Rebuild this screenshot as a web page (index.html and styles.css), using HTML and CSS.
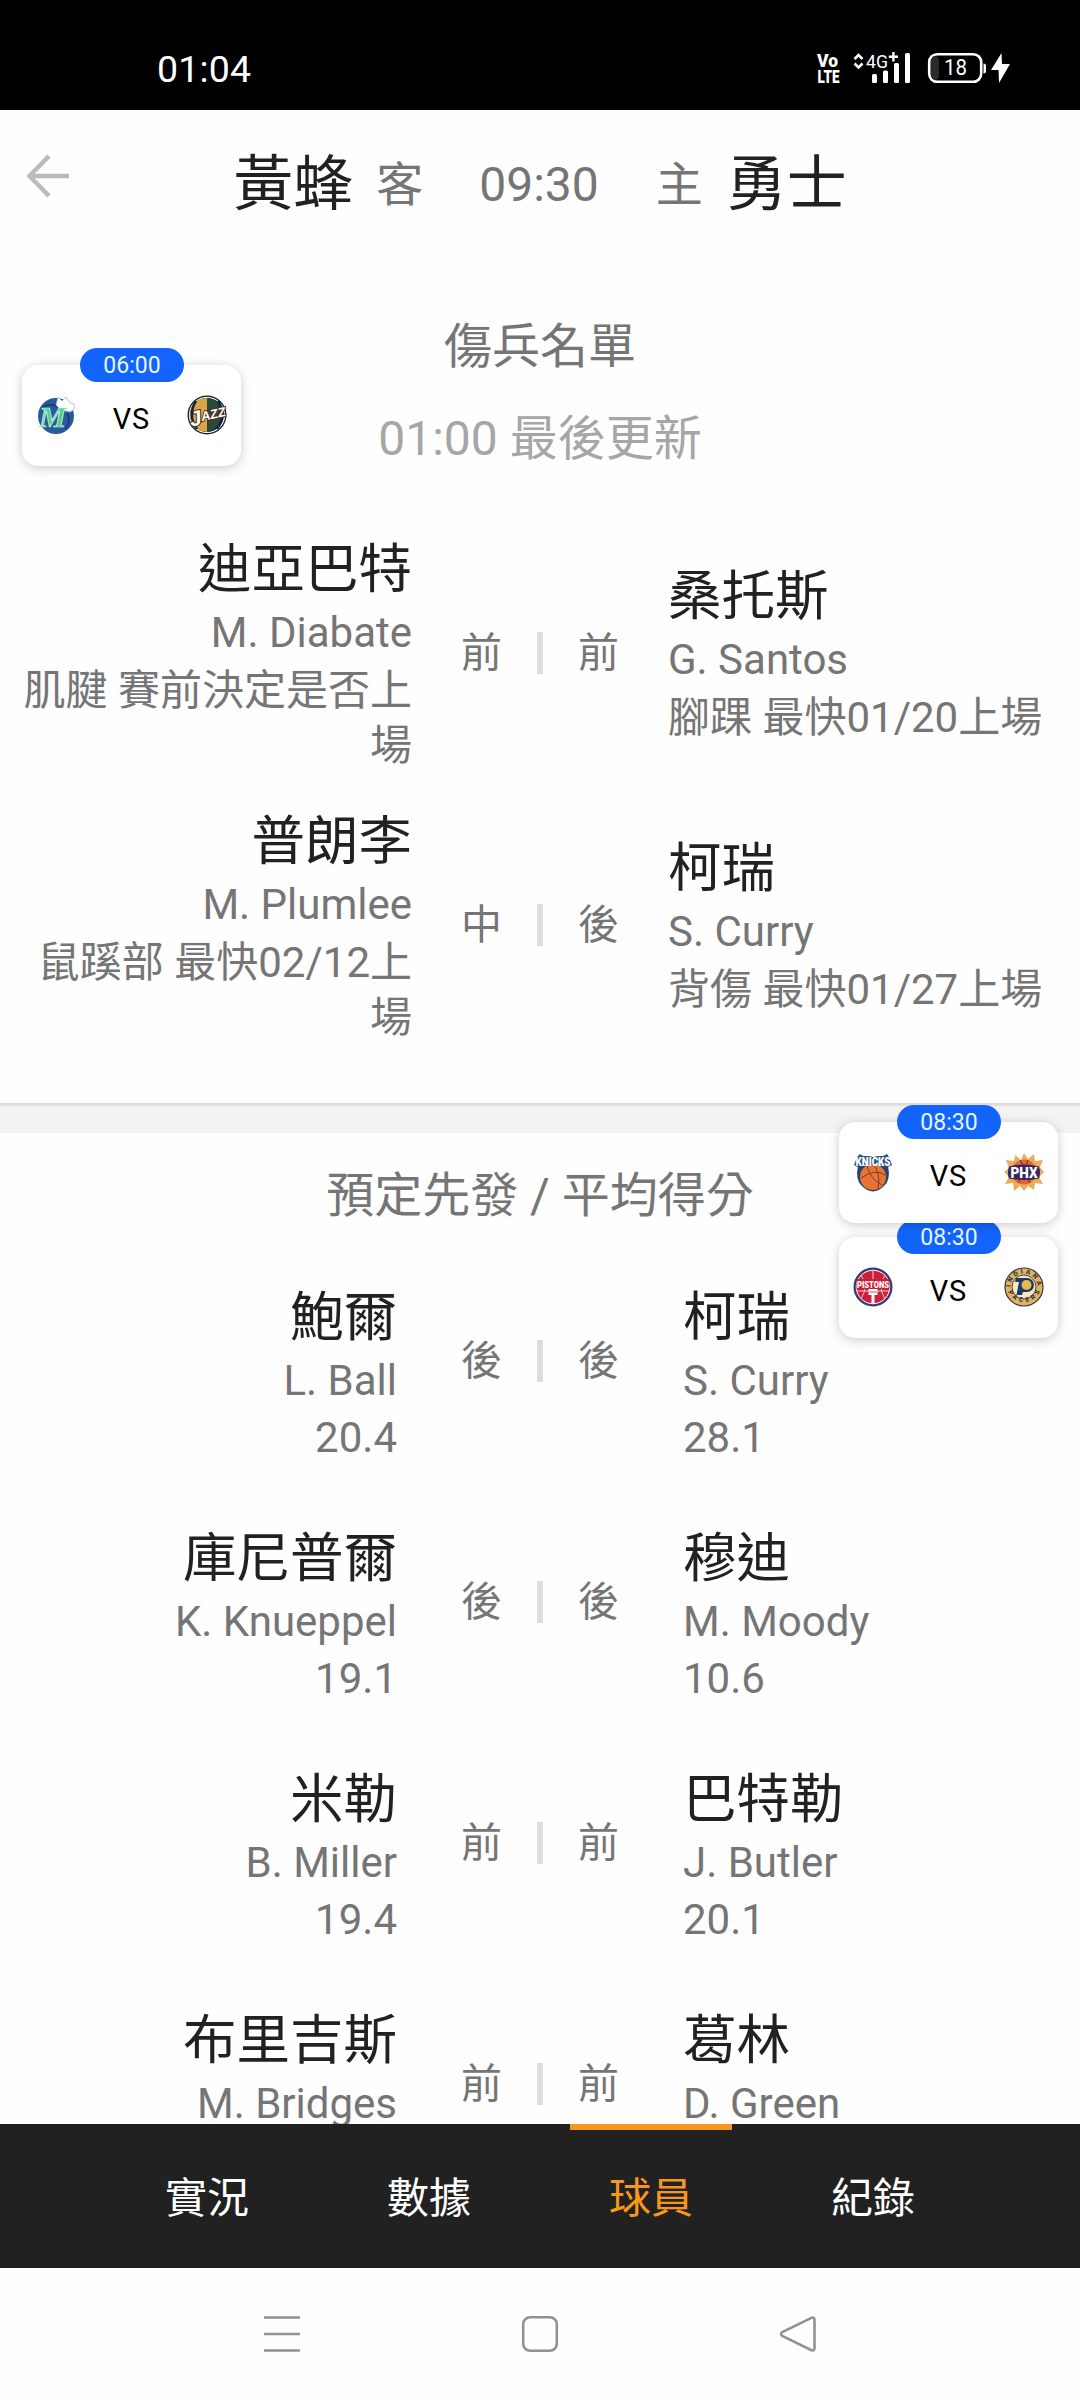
FILE: index.html
```html
<!DOCTYPE html>
<html lang="zh-Hant">
<head>
  <meta charset="UTF-8" />
  <meta name="viewport" content="width=device-width, initial-scale=1.0" />
  <title>黃蜂 vs 勇士</title>
  <link rel="stylesheet" href="styles.css">
</head>
<body>
  <div class="status-bar">
    <span class="clock">01:04</span>
    <svg class="status-icons" viewBox="812 50 204 40" fill="#fff">
      <text x="817" y="68" font-size="17.500" font-weight="900" textLength="21" lengthAdjust="spacingAndGlyphs">Vo</text>
      <text x="817.5" y="84" font-size="18.5" font-weight="900" textLength="22" lengthAdjust="spacingAndGlyphs">LTE</text>
      <path d="M854.5 60l4-4 4 4M854.5 64.5l4 4 4-4" fill="none" stroke="#fff" stroke-width="2.6" />
      <text x="866" y="68.5" font-size="18.5" textLength="22" lengthAdjust="spacingAndGlyphs">4G</text>
      <path d="M892.2 53h2.4v3.6h3.4V59h-3.4v3.4h-2.4V59h-3.4v-2.4h3.4z" />
      <rect x="872" y="75" width="5" height="9" rx="1.5" />
      <rect x="883" y="71.500" width="5" height="12.500" rx="1.5" />
      <rect x="894" y="64" width="5" height="20" rx="1.5" />
      <rect x="905" y="54" width="5" height="30" rx="1.5" />
      <rect x="929.2" y="55.2" width="52" height="27.600" rx="8" fill="none" stroke="#fff" stroke-width="2.6" />
      <rect x="931" y="57" width="8" height="24" rx="5" fill="#2a2a2a" />
      <path d="M983.500 64.500q2.500 0 2.500 2v6q0 2-2.500 2z" />
      <text x="944" y="76" font-size="21.500" textLength="23" lengthAdjust="spacingAndGlyphs">18</text>
      <path d="M1001.500 54l-10.500 17h7.500l.5 13 11-19h-8z" />
    </svg>
  </div>

  <header class="match-header">
    <svg class="back" viewBox="0 0 44 44" fill="none" stroke="#bbb" stroke-width="4.500">
      <path d="M43 22H4M23 2L3.500 22 23 42" />
    </svg>
    <span class="team">黃蜂</span>
    <span class="side away">客</span>
    <span class="tipoff">09:30</span>
    <span class="side home">主</span>
    <span class="team">勇士</span>
  </header>

  <main>
    <section class="injuries">
      <h2>傷兵名單</h2>
      <p class="updated">01:00 最後更新</p>

      <div class="row">
        <div class="player left">
          <div class="name">迪亞巴特</div>
          <div class="en">M. Diabate</div>
          <div class="note">肌腱 賽前決定是否上場</div>
        </div>
        <div class="pos"><span>前</span><i></i><span>前</span></div>
        <div class="player">
          <div class="name">桑托斯</div>
          <div class="en">G. Santos</div>
          <div class="note">腳踝 最快01/20上場</div>
        </div>
      </div>

      <div class="row">
        <div class="player left">
          <div class="name">普朗李</div>
          <div class="en">M. Plumlee</div>
          <div class="note">鼠蹊部 最快02/12上場</div>
        </div>
        <div class="pos"><span>中</span><i></i><span>後</span></div>
        <div class="player">
          <div class="name">柯瑞</div>
          <div class="en">S. Curry</div>
          <div class="note">背傷 最快01/27上場</div>
        </div>
      </div>
    </section>

    <div class="divider"></div>

    <section class="starters">
      <h2>預定先發 / 平均得分</h2>

      <div class="row">
        <div class="player left">
          <div class="name">鮑爾</div>
          <div class="en">L. Ball</div>
          <div class="en">20.4</div>
        </div>
        <div class="pos"><span>後</span><i></i><span>後</span></div>
        <div class="player">
          <div class="name">柯瑞</div>
          <div class="en">S. Curry</div>
          <div class="en">28.1</div>
        </div>
      </div>

      <div class="row">
        <div class="player left">
          <div class="name">庫尼普爾</div>
          <div class="en">K. Knueppel</div>
          <div class="en">19.1</div>
        </div>
        <div class="pos"><span>後</span><i></i><span>後</span></div>
        <div class="player">
          <div class="name">穆迪</div>
          <div class="en">M. Moody</div>
          <div class="en">10.6</div>
        </div>
      </div>

      <div class="row">
        <div class="player left">
          <div class="name">米勒</div>
          <div class="en">B. Miller</div>
          <div class="en">19.4</div>
        </div>
        <div class="pos"><span>前</span><i></i><span>前</span></div>
        <div class="player">
          <div class="name">巴特勒</div>
          <div class="en">J. Butler</div>
          <div class="en">20.1</div>
        </div>
      </div>

      <div class="row">
        <div class="player left">
          <div class="name">布里吉斯</div>
          <div class="en">M. Bridges</div>
        </div>
        <div class="pos"><span>前</span><i></i><span>前</span></div>
        <div class="player">
          <div class="name">葛林</div>
          <div class="en">D. Green</div>
        </div>
      </div>
    </section>
  </main>

  <nav class="tabs">
    <a>實況</a>
    <a>數據</a>
    <a class="active">球員</a>
    <a>紀錄</a>
  </nav>

  <div class="sys-nav">
    <svg viewBox="0 0 38 38"><path d="M1 2.500h36M1 19h36M1 35.500h36" /></svg>
    <svg viewBox="0 0 38 38"><rect x="2.200" y="2.200" width="33.600" height="33.600" rx="7" /></svg>
    <svg viewBox="0 0 38 38"><path d="M32.500 2.800L3.300 17q-2.500 2 0 4l29.200 14.200q3 1 3-2V4.800q0-3-3-2z" /></svg>
  </div>

  <!-- floating score widgets -->
  <div class="widget mavs-jazz">
    <span class="time">06:00</span>
    <svg class="logo" viewBox="0 0 40 40">
      <circle cx="20" cy="21" r="18" fill="#2a589c" />
      <path d="M6 13q8-6 16-1M31 18q5 8-2 16" fill="none" stroke="#163a70" stroke-width="1.5" />
      <path d="M22 2l4 4 4-4 4 6 4 1q2 5-4 8l-9-2-5-5z" fill="#fff" stroke="#9bb9c8" stroke-width=".8" />
      <text x="3" y="32" font-family="Liberation Serif" font-style="italic" font-weight="bold" font-size="29" textLength="27" lengthAdjust="spacingAndGlyphs" fill="#55cf8d" stroke="#d8fbe6" stroke-width=".7">M</text>
    </svg>
    <span class="vs">VS</span>
    <svg class="logo" viewBox="0 0 40 40">
      <circle cx="20" cy="20" r="18.800" fill="#fff" stroke="#1d2b3b" stroke-width="1.400" />
      <circle cx="20" cy="20" r="17" fill="#14263c" />
      <path d="M20 3a17 17 0 0 0-10 31q5 3 10 3z" fill="#dda443" />
      <path d="M20 3q10 0 13 10v14q-5 9-13 10z" fill="#294b35" />
      <path d="M9 6q-9 14 1 28M31 6q9 14-1 28" fill="none" stroke="#14263c" stroke-width="2.500" />
      <g transform="rotate(-13 20 20)" font-family="Liberation Sans" font-style="italic" font-weight="bold" fill="#fff" stroke="#512a24" stroke-width="2" paint-order="stroke">
        <text x="2" y="28"><tspan font-size="21">J</tspan><tspan font-size="13" dy="-3" textLength="25" lengthAdjust="spacingAndGlyphs">AZZ</tspan></text>
      </g>
    </svg>
  </div>

  <div class="widget pistons-pacers">
    <span class="time">08:30</span>
    <svg class="logo" viewBox="0 0 40 40">
      <circle cx="20" cy="20" r="18.500" fill="#c8203a" stroke="#27407f" stroke-width="2" />
      <circle cx="20" cy="20" r="16.700" fill="none" stroke="#fff" stroke-width="1" />
      <path d="M20 3v34M8 8q8 11 0 24M32 8q-8 11 0 24M4 24h32" fill="none" stroke="#f1c9d0" stroke-width="1" />
      <rect x="3.500" y="12" width="33" height="10" fill="#c8203a" />
      <text x="4" y="20.500" font-weight="900" font-size="9" textLength="32" lengthAdjust="spacingAndGlyphs" fill="#fff">PISTONS</text>
      <path d="M15.500 22h9v6h-3v8h-3v-8h-3z" fill="#fff" />
      <path d="M16 25h8" stroke="#c8203a" stroke-width=".8" />
    </svg>
    <span class="vs">VS</span>
    <svg class="logo" viewBox="0 0 40 40">
      <circle cx="20" cy="20" r="19" fill="#dcb367" stroke="#3a3530" stroke-width="1.200" />
      <circle cx="20" cy="20" r="12" fill="#f7e8c4" stroke="#4d4638" stroke-width="1" />
      <path id="top-arc" d="M6.500 20a13.500 13.500 0 0 1 27 0" fill="none" />
      <path id="bottom-arc" d="M3.500 23a17.300 17.300 0 0 0 33 0" fill="none" />
      <text font-size="6.500" font-weight="900" fill="#3a3530"><textPath href="#top-arc" textLength="41">INDIANA</textPath></text>
      <text font-size="6.500" font-weight="900" fill="#3a3530"><textPath href="#bottom-arc" startOffset="2" textLength="40">PACERS</textPath></text>
      <!-- the P, with the ball as its bowl -->
      <path d="M12 11h11a7 7 0 0 1 0 14h-4l-1 3h-5.500l2.500-13h-4z" fill="#1c3768" />
      <circle cx="22.500" cy="18" r="5" fill="#e8b94d" />
    </svg>
  </div>

  <div class="widget knicks-suns">
    <span class="time">08:30</span>
    <svg class="logo" viewBox="0 0 40 40">
      <path d="M5 14q-3 14 4 20 5 5 11 5.500 6-.5 11-5.500 7-6 4-20z" fill="#23426f" />
      <circle cx="20" cy="25" r="13" fill="#e77432" />
      <path d="M8 26q14-10 24-3M14 14q3 13 15 19M20 12q8 9 5 25" fill="none" stroke="#783b2b" stroke-width="1" />
      <path d="M1 13l3-8 3-3 3 2h6l4 1 5-1h5l4-2 2 3 3 8-4 2q-15-5-31 0z" fill="#285486" />
      <text x="2.500" y="13.500" font-weight="900" font-size="12" textLength="35" lengthAdjust="spacingAndGlyphs" fill="#fff">KNICKS</text>
    </svg>
    <span class="vs">VS</span>
    <svg class="logo" viewBox="0 0 40 40">
      <path d="M20 1l4 6 6-5 1 7 8-1-3 7 4 5-5 5 4 7-8-1-1 7-6-4-4 5-4-5-6 5-1-8-8 1 4-7-5-5 5-4-3-8 8 1 1-6 6 5z" fill="#eaad5b" />
      <circle cx="20" cy="20" r="12.500" fill="#df6735" />
      <path d="M9 14q11 5 22 0M16 8l3 5M24 8l-2 6M14 31l3-6M26 31l-3-6" stroke="#5b2846" stroke-width="1" fill="none" />
      <path d="M5 14.500q15-4 30 0 2 6 0 12-15 3-30 0-2-6 0-12z" fill="#37265f" />
      <text x="6.500" y="25.500" font-weight="900" font-size="14" textLength="27" lengthAdjust="spacingAndGlyphs" fill="#fff">PHX</text>
    </svg>
  </div>
</body>
</html>
```

FILE: styles.css
```css
* {
  box-sizing: border-box;
}
body {
  margin: 0;
  width: 1080px;
  height: 2400px;
  display: flex;
  flex-direction: column;
  position: relative;
  overflow: hidden;
  background: #fefefe;
  color: #757575;
  font-family: Roboto, "Noto Sans CJK TC", sans-serif;
}
.status-bar {
  height: 110px;
  padding: 28px 64px 0 157px;
  display: flex;
  justify-content: space-between;
  align-items: center;
  background: #000;
  color: #fff;
}
.clock {
  font-size: 37.5px;
  line-height: 40px;
  letter-spacing: 0.2px;
}
.status-icons {
  width: 204px;
  height: 40px;
}
.match-header {
  height: 145px;
  padding-top: 5px;
  position: relative;
  display: flex;
  justify-content: center;
  align-items: center;
  line-height: 80px;
}
.back {
  position: absolute;
  left: 26px;
  top: 44px;
  width: 44px;
  height: 44px;
}
.team {
  font-size: 60px;
  color: #212121;
}
.side {
  font-size: 47px;
}
.away {
  margin-left: 23px;
}
.home {
  margin-right: 24px;
}
.tipoff {
  margin: 0 57px 0 56px;
  font-size: 48px;
}
main {
  flex: 1;
  min-height: 0;
  overflow: hidden;
}
h2,
.updated {
  margin: 0;
  font-size: 48px;
  font-weight: normal;
  line-height: 92px;
  text-align: center;
}
.updated {
  margin-bottom: 32px;
  color: #a6a6a6;
}
.injuries {
  padding: 46px 0 42px;
}
.row {
  display: flex;
  justify-content: center;
}
.injuries .row {
  height: 272px;
  align-items: center;
}
.starters .row {
  height: 241px;
}
.player {
  width: 461px;
  padding: 0 16px 0 49px;
  font-size: 42px;
}
.player.left {
  padding: 0 49px 0 16px;
  text-align: right;
}
.starters .player {
  padding: 0 0 0 64px;
}
.starters .player.left {
  padding: 0 64px 0 0;
}
.name {
  font-size: 53.5px;
  line-height: 72px;
  color: #212121;
}
.en {
  line-height: 57px;
}
.note {
  line-height: 55px;
}
.injuries .en {
  line-height: 54px;
  margin-bottom: 3px;
}
.starters .name {
  padding-top: 3px;
  line-height: 69px;
}
.pos {
  width: 158px;
  height: 42px;
  display: flex;
  justify-content: space-between;
  align-items: center;
  font-size: 41px;
  line-height: 42px;
}
.starters .pos {
  margin-top: 60px;
}
.pos i {
  width: 6px;
  height: 42px;
  background: #ddd;
}
.divider {
  height: 30px;
  background: #f3f3f3;
  border-top: 3px solid #dfdfdf;
}
.starters {
  padding-top: 17px;
}
.starters h2 {
  margin-bottom: 38px;
}
.tabs {
  height: 144px;
  display: flex;
  justify-content: center;
  gap: 60px;
  background: #212121;
}
.tabs a {
  width: 162px;
  padding-top: 6px;
  border-top: 6px solid transparent;
  color: #fff;
  font-size: 42px;
  line-height: 126px;
  text-align: center;
}
.tabs .active {
  color: #f7981d;
  border-color: #f7981d;
}
.sys-nav {
  height: 132px;
  display: flex;
  justify-content: center;
  align-items: center;
  gap: 220px;
}
.sys-nav svg {
  width: 38px;
  height: 38px;
  fill: none;
  stroke: #929292;
  stroke-width: 2.6;
}

/* floating widgets */
.widget {
  position: absolute;
  width: 219px;
  height: 101px;
  padding: 0 14px;
  display: flex;
  justify-content: space-between;
  background: #fff;
  border-radius: 16px;
  box-shadow: 0 2px 11px rgba(0, 0, 0, 0.2);
}
.widget .time {
  position: absolute;
  left: 58px;
  top: -17px;
  width: 104px;
  height: 34px;
  border-radius: 17px;
  background: #1264fc;
  color: #e6f6ff;
  font-size: 23px;
  line-height: 35px;
  text-align: center;
}
.logo {
  width: 40px;
  height: 40px;
  margin-top: 30px;
}
.vs {
  color: #000;
  font-size: 29px;
  line-height: 108px;
  letter-spacing: 0.8px;
}
.mavs-jazz {
  left: 22px;
  top: 365px;
}
.knicks-suns {
  left: 839px;
  top: 1122px;
}
.pistons-pacers {
  left: 839px;
  top: 1237px;
}
```
